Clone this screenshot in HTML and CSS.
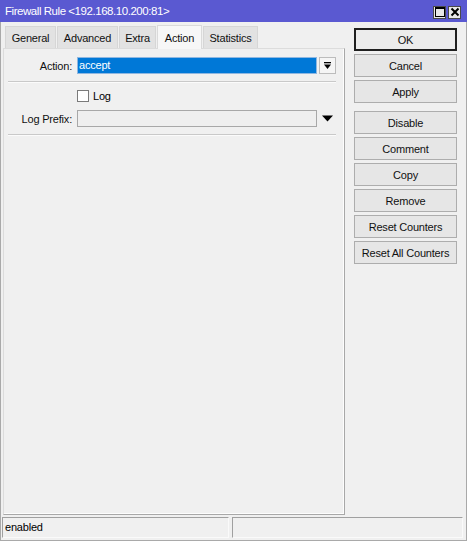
FILE: index.html
```html
<!DOCTYPE html>
<html>
<head>
<meta charset="utf-8">
<title>Firewall Rule</title>
<link rel="stylesheet" href="styles.css">
</head>
<body>
<div class="window">
  <div class="titlebar">
    <span class="title">Firewall Rule &lt;192.168.10.200:81&gt;</span>
    <div class="tb-buttons">
      <span class="tb-btn">
        <svg width="10" height="10" viewBox="0 0 10 10"><rect x="0.5" y="0.5" width="9" height="9" fill="none" stroke="#000" stroke-width="1"/><line x1="0" y1="1.5" x2="10" y2="1.5" stroke="#000" stroke-width="1"/></svg>
      </span>
      <span class="tb-btn">
        <svg width="10" height="10" viewBox="0 0 10 10"><path d="M1.5 1.5 L8.5 8.5 M8.5 1.5 L1.5 8.5" stroke="#000" stroke-width="2"/></svg>
      </span>
    </div>
  </div>

  <div class="main">
    <div class="left">
      <div class="tabs">
        <div class="tab t-general">General</div>
        <div class="tab t-advanced">Advanced</div>
        <div class="tab t-extra">Extra</div>
        <div class="tab active t-action">Action</div>
        <div class="tab t-stats">Statistics</div>
      </div>
      <div class="panel">
        <div class="row">
          <label class="lbl">Action:</label>
          <div class="field selected">accept</div>
          <span class="drop-btn">
            <svg width="9" height="9" viewBox="0 0 9 9"><rect x="1" y="1" width="7" height="1.3" fill="#000"/><path d="M1 3.5 H8 L4.5 8 Z" fill="#000"/></svg>
          </span>
        </div>
        <div class="sep"></div>
        <div class="row check-row">
          <span class="lbl"></span>
          <span class="checkbox"></span>
          <span class="check-text">Log</span>
        </div>
        <div class="row prefix-row">
          <label class="lbl">Log Prefix:</label>
          <div class="field"></div>
          <span class="tri">
            <svg width="11" height="7" viewBox="0 0 11 7"><path d="M0 0.5 H11 L5.5 6.5 Z" fill="#000"/></svg>
          </span>
        </div>
        <div class="sep"></div>
      </div>
    </div>

    <div class="right">
      <button class="btn default">OK</button>
      <button class="btn">Cancel</button>
      <button class="btn">Apply</button>
      <button class="btn group-start">Disable</button>
      <button class="btn">Comment</button>
      <button class="btn">Copy</button>
      <button class="btn">Remove</button>
      <button class="btn">Reset Counters</button>
      <button class="btn">Reset All Counters</button>
    </div>
  </div>

  <div class="statusbar">
    <div class="status-cell first">enabled</div>
    <div class="status-cell second"></div>
  </div>
</div>
</body>
</html>
```

FILE: styles.css
```css
* { box-sizing: border-box; }

html, body {
  margin: 0;
  padding: 0;
  background: #f0f0f0;
}

body {
  font-family: "Liberation Sans", Arial, sans-serif;
  font-size: 11px;
  color: #000;
}

.window {
  width: 467px;
  height: 541px;
  display: flex;
  flex-direction: column;
  border: 1px solid #a9a9a9;
  border-top: none;
  background: #f0f0f0;
}

/* Title bar */
.titlebar {
  height: 22px;
  margin: 0 -1px;
  background: #5a59d1;
  color: #fff;
  display: flex;
  align-items: center;
  padding: 0 6px 0 5px;
}
.title {
  font-size: 11.5px;
  letter-spacing: -0.45px;
  flex: 1;
}
.tb-buttons {
  display: flex;
  gap: 2px;
  margin-top: 2px;
}
.tb-btn {
  width: 13px;
  height: 13px;
  background: #e8e8e8;
  border: 1px solid #4a4a4a;
  display: flex;
  align-items: center;
  justify-content: center;
}

/* Main area */
.main {
  height: 493px;
  display: flex;
  padding-left: 2px;
}
.left {
  width: 342px;
  display: flex;
  flex-direction: column;
}

.tabs {
  height: 26px;
  display: flex;
  align-items: flex-end;
  padding-left: 2px;
  gap: 1px;
}
.tab {
  height: 22px;
  background: #e2e2e2;
  border: 1px solid #d6d6d6;
  border-bottom: none;
  display: flex;
  align-items: center;
  justify-content: center;
  letter-spacing: -0.2px;
  color: #111;
}
.tab.active {
  height: 24px;
  background: #f7f7f7;
  border-color: #dadada;
  margin-bottom: -1px;
  position: relative;
  z-index: 1;
}
.t-general { width: 51px; }
.t-advanced { width: 61px; }
.t-extra { width: 37px; }
.t-action { width: 45px; }
.t-stats { width: 55px; }

.panel {
  flex: 1;
  border: 1px solid #dcdcdc;
  border-right-color: #a8a8a8;
  border-bottom-color: #a8a8a8;
  box-shadow: inset -1px -1px 0 #fdfdfd;
  padding: 8px 7px 0 1px;
}

.row {
  display: flex;
  align-items: center;
  height: 17px;
}
.lbl {
  width: 67px;
  text-align: right;
  margin-right: 5px;
  flex: none;
  letter-spacing: -0.2px;
  color: #111;
}
.field {
  width: 240px;
  height: 17px;
  background: #f0f0f0;
  border: 1px solid #a8a8a8;
  padding: 0 2px;
  line-height: 15px;
  letter-spacing: -0.2px;
}
.field.selected {
  background: #0078d7;
  border-color: #8fb7e0;
  color: #fff;
  padding-left: 1px;
}
.drop-btn {
  width: 17px;
  height: 17px;
  margin-left: 2px;
  background: #f5f5f5;
  border: 1px solid #bcbcbc;
  display: flex;
  align-items: center;
  justify-content: center;
}

.sep {
  margin: 7px 0 0 3px;
  width: 328px;
  height: 2px;
  border-top: 1px solid #c9c9c9;
  border-bottom: 1px solid #fbfbfb;
}

.check-row {
  margin-top: 6px;
  height: 14px;
}
.checkbox {
  width: 12px;
  height: 12px;
  background: #fff;
  border: 1px solid #7a7a7a;
  margin-right: 4px;
}
.check-text {
  letter-spacing: -0.2px;
}

.prefix-row {
  margin-top: 7px;
}
.prefix-row .field {
  background: #efefef;
}
.tri {
  margin-left: 5px;
  display: flex;
  align-items: center;
}

/* Button column */
.right {
  margin-left: 9px;
  width: 103px;
  padding-top: 6px;
  display: flex;
  flex-direction: column;
  gap: 3px;
}
.btn {
  height: 23px;
  width: 103px;
  margin: 0;
  padding: 0;
  font-family: "Liberation Sans", Arial, sans-serif;
  font-size: 11px;
  letter-spacing: -0.2px;
  color: #111;
  background: #e6e6e6;
  border: 1px solid #adadad;
  border-radius: 0;
}
.btn.default {
  border: 2px solid #1f1f1f;
  background: #ececec;
}
.btn.group-start {
  margin-top: 5px;
}

/* Status bar */
.statusbar {
  display: flex;
  gap: 3px;
  padding: 2px 3px 0 1px;
  height: 24px;
}
.status-cell {
  height: 21px;
  border-top: 1px solid #a0a0a0;
  border-left: 1px solid #a0a0a0;
  border-right: 1px solid #fafafa;
  border-bottom: 1px solid #fafafa;
  padding-left: 2px;
  line-height: 19px;
  letter-spacing: -0.2px;
}
.status-cell.first { width: 227px; }
.status-cell.second { flex: 1; }
```
